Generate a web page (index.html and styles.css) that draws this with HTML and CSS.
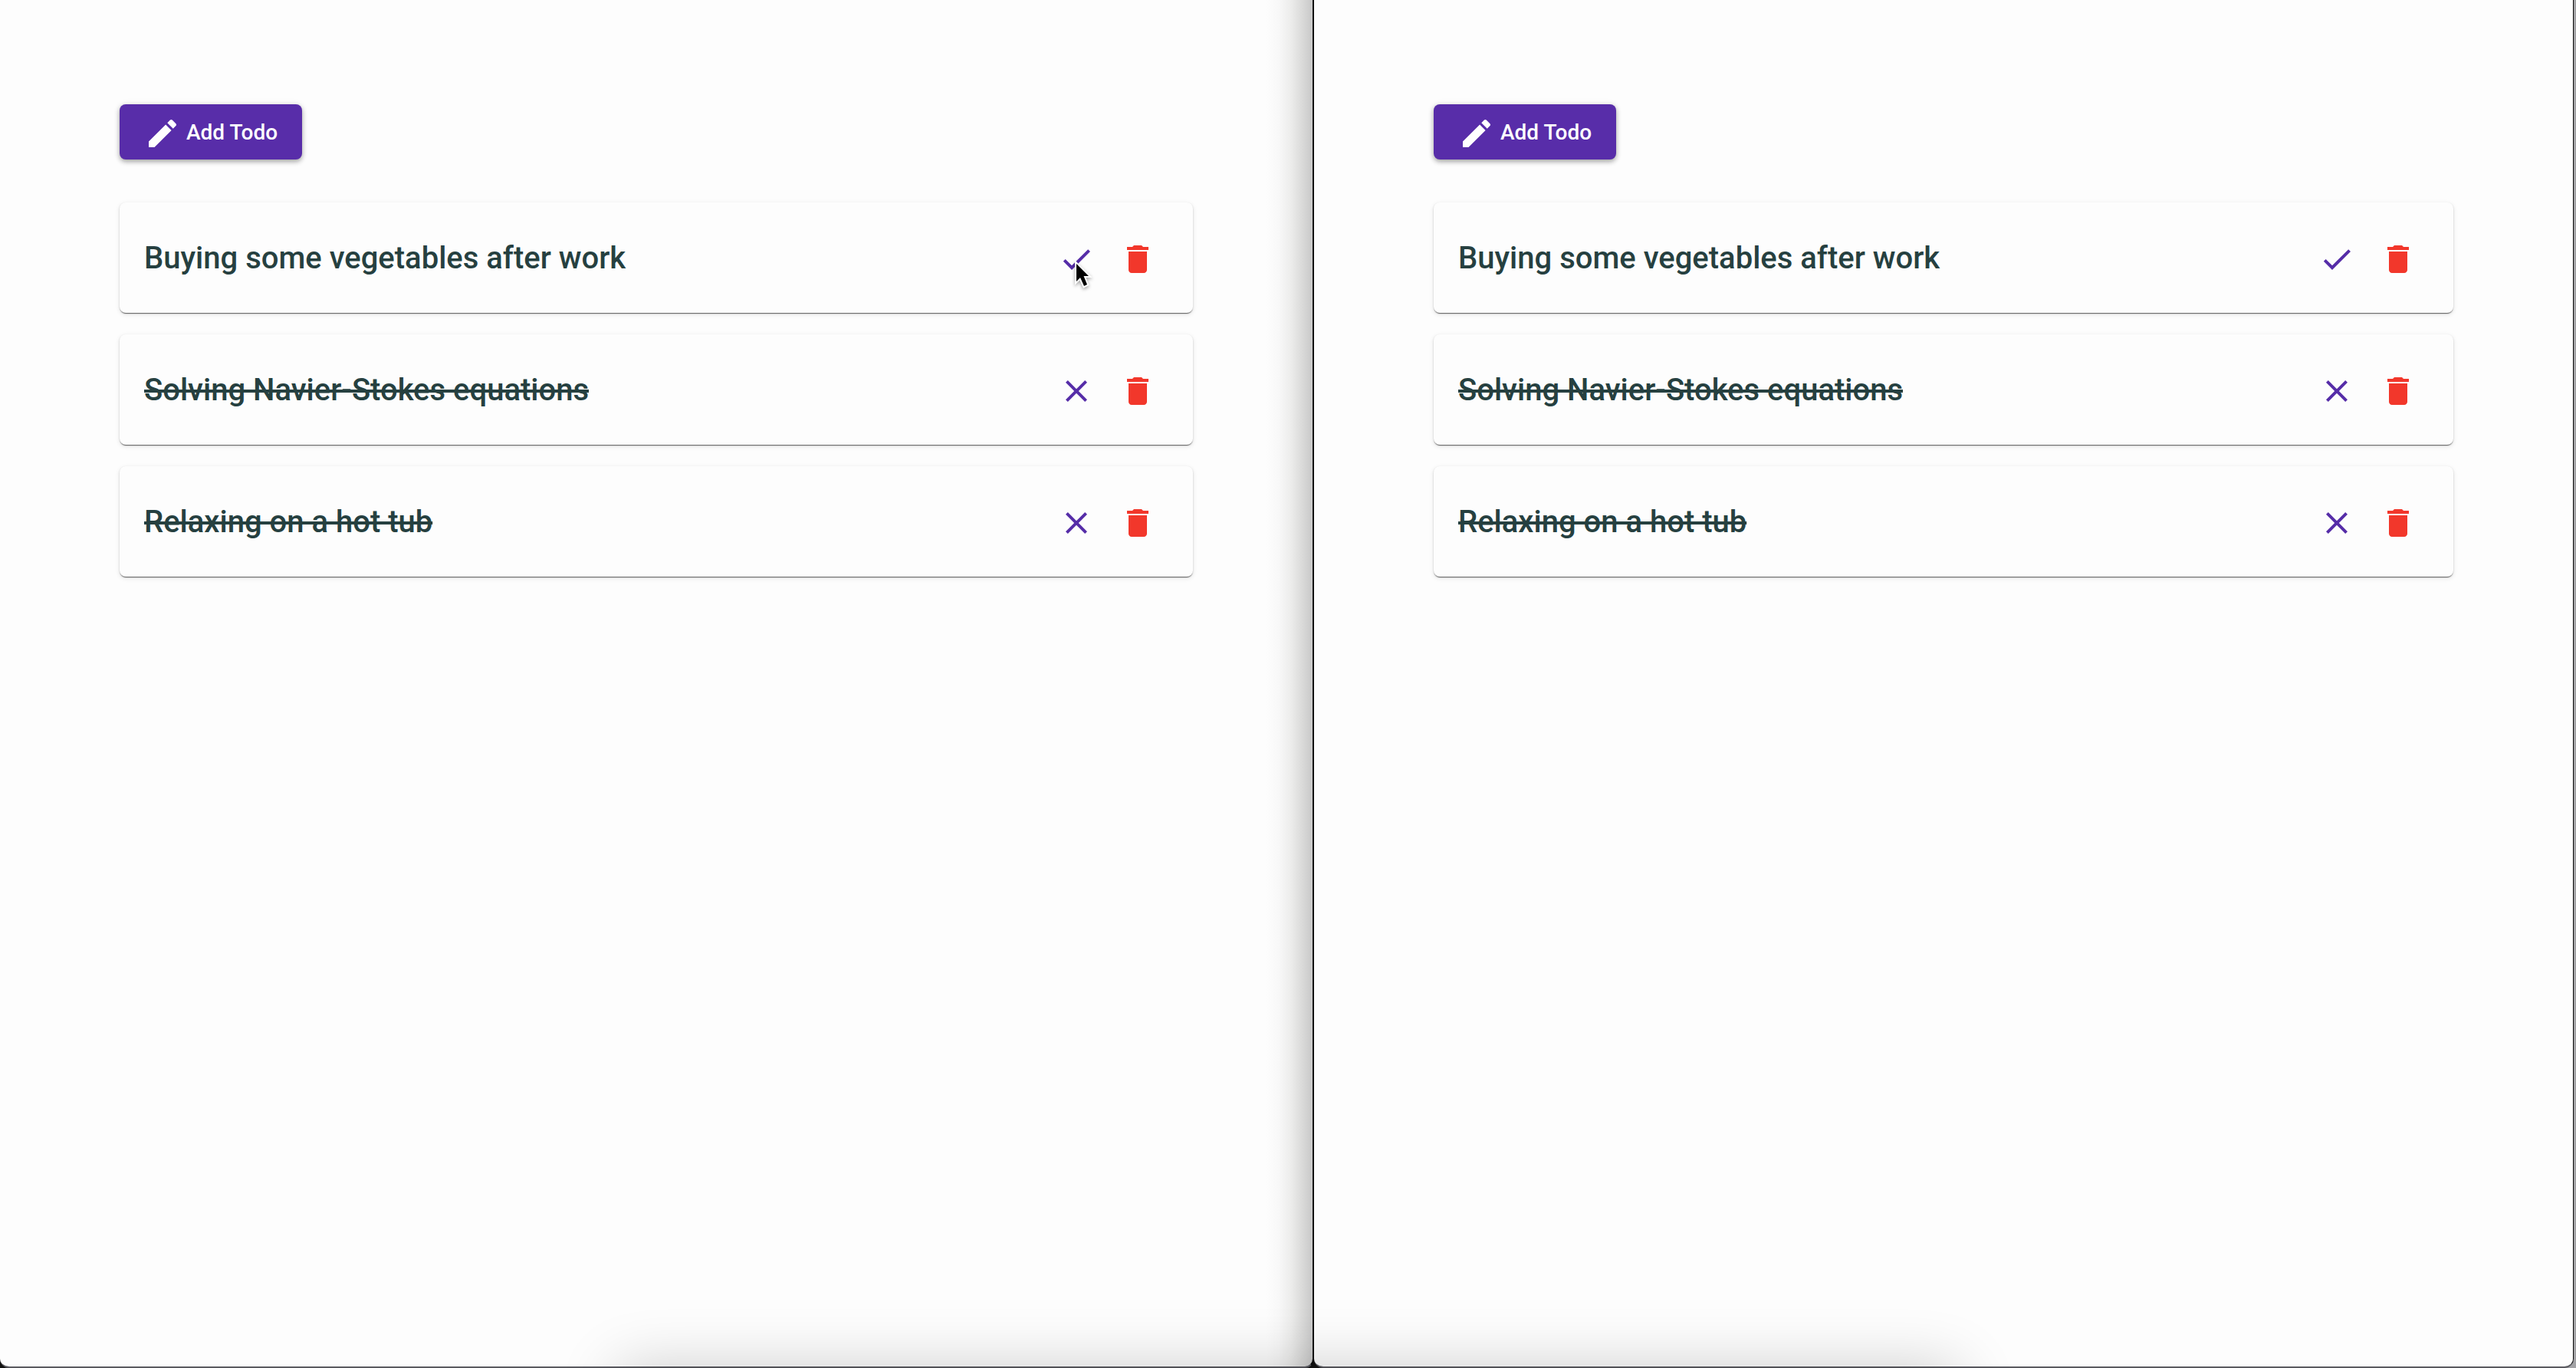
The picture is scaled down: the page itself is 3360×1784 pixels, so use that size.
FILE: index.html
```html
<!DOCTYPE html>
<html lang="en">
<head>
<meta charset="utf-8">
<title>Todos</title>
<link rel="stylesheet" href="styles.css">
</head>
<body>
<svg width="0" height="0" class="sprite" aria-hidden="true">
  <symbol id="edit" viewBox="0 0 24 24"><path d="M3 17.25V21h3.75L17.81 9.94l-3.75-3.75L3 17.25zM20.71 7.04c.39-.39.39-1.02 0-1.41l-2.34-2.34c-.39-.39-1.02-.39-1.41 0l-1.83 1.83 3.75 3.75 1.83-1.83z"/></symbol>
  <symbol id="check" viewBox="0 0 24 24"><path d="M9 16.17 4.83 12l-1.42 1.41L9 19 21 7l-1.41-1.41z"/></symbol>
  <symbol id="close" viewBox="0 0 24 24"><path d="M19 6.41 17.59 5 12 10.59 6.41 5 5 6.41 10.59 12 5 17.59 6.41 19 12 13.41 17.59 19 19 17.59 13.41 12z"/></symbol>
  <symbol id="trash" viewBox="0 0 24 24"><path d="M6 19c0 1.1.9 2 2 2h8c1.1 0 2-.9 2-2V7H6v12zM19 4h-3.5l-1-1h-5l-1 1H5v2h14V4z"/></symbol>
</svg>
<div class="desktop">
  <main class="window window-back">
    <button class="add" type="button"><svg class="icon"><use href="#edit"/></svg><span class="label">Add Todo</span></button>
    <ul class="todos">
      <li class="todo">
        <h2 class="title">Buying some vegetables after work</h2>
        <div class="actions">
          <button class="action toggle" type="button" aria-label="Mark as done"><svg class="icon"><use href="#check"/></svg><svg class="cursor" viewBox="0 0 18 30" aria-hidden="true"><path d="M0 0V23L5 18L10 29L14 27L9.500 16H16Z"/></svg></button>
          <button class="action delete" type="button" aria-label="Delete"><svg class="icon"><use href="#trash"/></svg></button>
        </div>
      </li>
      <li class="todo">
        <h2 class="title done">Solving Navier-Stokes equations</h2>
        <div class="actions">
          <button class="action toggle" type="button" aria-label="Mark as not done"><svg class="icon"><use href="#close"/></svg></button>
          <button class="action delete" type="button" aria-label="Delete"><svg class="icon"><use href="#trash"/></svg></button>
        </div>
      </li>
      <li class="todo">
        <h2 class="title done">Relaxing on a hot tub</h2>
        <div class="actions">
          <button class="action toggle" type="button" aria-label="Mark as not done"><svg class="icon"><use href="#close"/></svg></button>
          <button class="action delete" type="button" aria-label="Delete"><svg class="icon"><use href="#trash"/></svg></button>
        </div>
      </li>
    </ul>
  </main>
  <section class="window window-front">
    <button class="add" type="button"><svg class="icon"><use href="#edit"/></svg><span class="label">Add Todo</span></button>
    <ul class="todos">
      <li class="todo">
        <h2 class="title">Buying some vegetables after work</h2>
        <div class="actions">
          <button class="action toggle" type="button" aria-label="Mark as done"><svg class="icon"><use href="#check"/></svg></button>
          <button class="action delete" type="button" aria-label="Delete"><svg class="icon"><use href="#trash"/></svg></button>
        </div>
      </li>
      <li class="todo">
        <h2 class="title done">Solving Navier-Stokes equations</h2>
        <div class="actions">
          <button class="action toggle" type="button" aria-label="Mark as not done"><svg class="icon"><use href="#close"/></svg></button>
          <button class="action delete" type="button" aria-label="Delete"><svg class="icon"><use href="#trash"/></svg></button>
        </div>
      </li>
      <li class="todo">
        <h2 class="title done">Relaxing on a hot tub</h2>
        <div class="actions">
          <button class="action toggle" type="button" aria-label="Mark as not done"><svg class="icon"><use href="#close"/></svg></button>
          <button class="action delete" type="button" aria-label="Delete"><svg class="icon"><use href="#trash"/></svg></button>
        </div>
      </li>
    </ul>
  </section>
</div>
<div class="dock-shadow"></div>
</body>
</html>
```
FILE: styles.css
```css
* { box-sizing: border-box; }

body {
  margin: 0;
  font-family: Roboto, "Liberation Sans", sans-serif;
  background: #111;
  overflow: hidden;
}

.sprite { position: absolute; }

.desktop {
  display: grid;
  grid-template-columns: 857fr 823fr;
  min-height: 100vh;
  background: linear-gradient(to right, #111 99%, #a3a3a6 99%);
}

.window {
  padding: 136px 156px;
  background: #fdfdfd;
  border-bottom: 2px solid #5a5a60;
}

.window-back {
  border-right: 2px solid #0a0a0a;
  border-radius: 0 0 12px 12px;
  background: linear-gradient(to left, #c8c8c8, #d8d8d7 12px, #ececeb 28px, #f8f8f8 44px, #fdfdfd 60px);
}

.window-front {
  margin-right: 3px;
  border-right: 1px solid #0a0a0a;
  border-radius: 0 0 12px 12px;
}

.icon {
  display: block;
  width: 48px;
  height: 48px;
  fill: currentColor;
}

.add {
  display: flex;
  align-items: center;
  gap: 7px;
  height: 72px;
  padding: 0 32px;
  border: 0;
  border-radius: 8px;
  background: #582da9;
  color: #fff;
  font: 500 28px/40px Roboto, "Liberation Sans", sans-serif;
  box-shadow: 0 3px 6px rgba(0, 0, 0, .32), 0 0 10px rgba(0, 0, 0, .08);
}

.add .icon { margin-top: 4px; }

.label { padding-top: 2px; }

.todos {
  display: flex;
  flex-direction: column;
  gap: 28px;
  margin: 56px 0 0;
  padding: 0;
  list-style: none;
}

.todo {
  display: flex;
  align-items: center;
  justify-content: space-between;
  height: 144px;
  padding: 0 32px;
  border-radius: 8px;
  box-shadow: 0 2px 1px -1px rgba(0, 0, 0, .5), 0 1px 2px rgba(0, 0, 0, .2), 0 2px 6px rgba(0, 0, 0, .1);
  background: #fdfdfd;
}

.title {
  margin: 0;
  padding-top: 2px;
  color: #264040;
  font-size: 40px;
  font-weight: 500;
  line-height: 48px;
}

.done { text-decoration: line-through; }

.actions {
  display: flex;
  padding-top: 4px;
}

.action {
  position: relative;
  padding: 16px;
  border: 0;
  background: none;
}

.toggle { color: #562da8; }
.delete { color: #f2372b; }

/* Pointer resting on the toggle */
.cursor {
  position: absolute;
  top: 46px;
  left: 40px;
  width: 18px;
  height: 30px;
  overflow: visible;
  fill: #000;
  stroke: #fff;
  stroke-width: 4px;
  paint-order: stroke;
  filter: drop-shadow(0 2px 2px rgba(0, 0, 0, .35));
}

/* Glow of the hidden dock below the screen edge */
.dock-shadow {
  position: fixed;
  top: 100%;
  left: 24%;
  right: 24%;
  height: 160px;
  box-shadow: 0 0 80px rgba(0, 0, 0, .2);
}
```
